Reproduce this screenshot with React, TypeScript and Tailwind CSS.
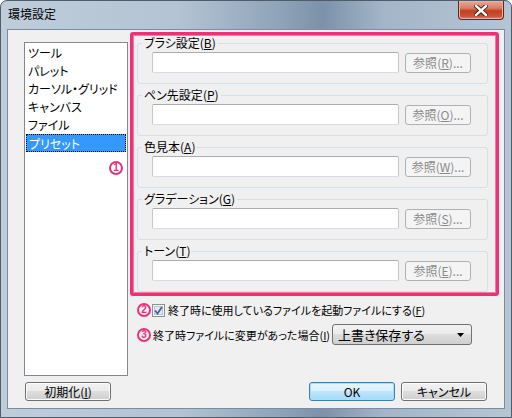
import React from "react";

const F = "font-['Noto_Sans_CJK_JP','Noto_Sans',sans-serif] [font-feature-settings:'palt']";

function M({ c }: { c: string }) {
  return (
    <span>
      (<span className="underline underline-offset-[1px]">{c}</span>)
    </span>
  );
}

function Num({ n, className = "" }: { n: string; className?: string }) {
  return (
    <span
      className={
        "flex h-[14px] w-[14px] shrink-0 items-center justify-center rounded-full border-[2px] border-[#e6337a] text-[10px] font-bold leading-none text-[#e6337a] font-['Liberation_Sans',sans-serif] " +
        className
      }
    >
      {n}
    </span>
  );
}

function Group({ label, m, b }: { label: string; m: string; b: string }) {
  return (
    <fieldset className="m-0 h-[48px] w-[351px] rounded-[3px] border border-[#d5dfe5] p-0">
      <legend className="ml-[4px] px-[2px] text-[12px] leading-[14px] text-black">
        {label}
        <M c={m} />
      </legend>
      <div className="mt-[2px] flex items-start pl-[14px]">
        <div className="h-[21px] w-[247px] rounded-[2px] border border-t-[#abadb3] border-x-[#c5c7cc] border-b-[#d8dce2] bg-white" />
        <div className="ml-[6px] mt-[1px] flex h-[20px] w-[66px] items-center justify-center rounded-[3px] border border-[#adb2b5] bg-[#f4f4f4] text-[12px] leading-none text-[#8a8a8a]">
          参照
          <M c={b} />
          ...
        </div>
      </div>
    </fieldset>
  );
}

function Btn({ children, def }: { children: React.ReactNode; def?: boolean }) {
  return (
    <div
      className={
        "flex h-[19px] w-[86px] items-center justify-center rounded-[3px] border text-[12px] leading-none text-black " +
        (def
          ? "border-[#3c7fb1] bg-[linear-gradient(#eaf6fd_0%,#d9f0fc_45%,#bee6fd_50%,#a7d9f5_100%)] shadow-[inset_0_0_0_1px_#9ee3fb]"
          : "border-[#707070] bg-[linear-gradient(#f2f2f2_0%,#ebebeb_45%,#dddddd_50%,#cfcfcf_100%)] shadow-[inset_0_0_0_1px_#fcfcfc]")
      }
    >
      {children}
    </div>
  );
}

export default function App() {
  const items = ["ツール", "パレット", "カーソル・グリッド", "キャンバス", "ファイル", "プリセット"];
  return (
    <div className={"h-[418px] w-[512px] bg-white " + F}>
      <div className="flex h-[418px] w-[512px] flex-col rounded-t-[7px] border border-[#4e5c6b] bg-[linear-gradient(90deg,#bfcddb_0%,#b3c3d3_35%,#8ea3b9_55%,#7c92aa_63%,#a3b5c8_75%,#b6c5d4_100%)]">
        {/* Title bar */}
        <div className="flex h-[28px] shrink-0 items-start">
          <div className="ml-[7px] mt-[5px] text-[12px] leading-[16px] text-black">環境設定</div>
          <div className="ml-auto mr-[7px] flex h-[19px] w-[46px] items-center justify-center rounded-b-[4px] border border-t-0 border-[#5b2a1f] bg-[linear-gradient(#e9a898_0%,#d77d66_40%,#c2401f_55%,#cc5333_85%,#e08a6f_100%)] shadow-[inset_0_0_0_1px_#eab1a2]">
            <svg width="14" height="11" viewBox="0 0 14 11">
              <path d="M2 1 L12 10 M12 1 L2 10" stroke="#3b1a12" strokeWidth="4.2" strokeLinecap="square" />
              <path d="M2 1 L12 10 M12 1 L2 10" stroke="#ffffff" strokeWidth="2.4" strokeLinecap="square" />
            </svg>
          </div>
        </div>
        {/* Client */}
        <div className="mx-[6px] mb-[8px] flex flex-1 flex-col border border-[#7b8c9e] bg-[#f0f0f0]">
          <div className="flex pl-[16px]">
            {/* List box */}
            <div className="relative mt-[12px] h-[334px] w-[104px] border border-[#828790] bg-white p-[1px]">
              {items.map((it, i) => (
                <div
                  key={it}
                  className={
                    "h-[18px] pl-[2px] text-[12px] leading-[18px] " +
                    (i === 5 ? "border border-dotted border-black bg-[#3399ff] leading-[16px] text-white" : "text-black")
                  }
                >
                  {it}
                </div>
              ))}
              <Num n="1" className="absolute left-[84px] top-[118px]" />
            </div>
            {/* Right column */}
            <div className="ml-[2px] mt-[2px] flex flex-col">
              <div className="flex h-[264px] w-[369px] flex-col gap-[4px] rounded-[3px] border-[3px] border-[#ec3275] pl-[4px] pt-[1px] shadow-[inset_0_0_0_1px_#f47aa3]">
                <Group label="ブラシ設定" m="B" b="R" />
                <Group label="ペン先設定" m="P" b="O" />
                <Group label="色見本" m="A" b="W" />
                <Group label="グラデーション" m="G" b="S" />
                <Group label="トーン" m="T" b="E" />
              </div>
              <div className="mt-[7px] flex h-[14px] items-center pl-[7px]">
                <Num n="2" className="mr-[1px]" />
                <svg width="13" height="13" viewBox="0 0 13 13" className="shrink-0">
                  <rect x="0.5" y="0.5" width="12" height="12" fill="#f4f4f4" stroke="#8e8f8f" />
                  <rect x="2.5" y="2.5" width="8" height="8" fill="#dfe8f3" stroke="#b7c4d6" />
                  <path d="M3 6.5 L5.5 9.5 L10 3" fill="none" stroke="#4a5f97" strokeWidth="1.8" />
                </svg>
                <span className="ml-[3px] whitespace-nowrap text-[11px] leading-[14px] text-black">
                  終了時に使用しているファイルを起動ファイルにする
                  <M c="F" />
                </span>
              </div>
              <div className="mt-[7px] flex h-[21px] items-center pl-[7px]">
                <Num n="3" className="mr-[2px]" />
                <span className="whitespace-nowrap text-[11px] leading-[14px] text-black">
                  終了時ファイルに変更があった場合
                  <M c="I" />
                </span>
                <div className="ml-auto mr-[27px] flex h-[21px] w-[140px] shrink-0 items-center rounded-[3px] border border-[#707070] bg-[linear-gradient(#f2f2f2_0%,#ebebeb_45%,#dddddd_50%,#cfcfcf_100%)] pl-[5px] pr-[7px] text-[13px] leading-none text-black">
                  <span className="-mt-[1px] text-[13px]">上書き保存する</span>
                  <svg width="7" height="4" viewBox="0 0 7 4" className="ml-auto">
                    <path d="M0 0 H7 L3.5 4 Z" fill="#000" />
                  </svg>
                </div>
              </div>
            </div>
          </div>
          <div className="mt-[6px] flex pl-[17px] pr-[17px]">
            <Btn>
              初期化
              <M c="I" />
            </Btn>
            <div className="ml-auto flex gap-[6px]">
              <Btn def>OK</Btn>
              <Btn>キャンセル</Btn>
            </div>
          </div>
        </div>
      </div>
    </div>
  );
}
